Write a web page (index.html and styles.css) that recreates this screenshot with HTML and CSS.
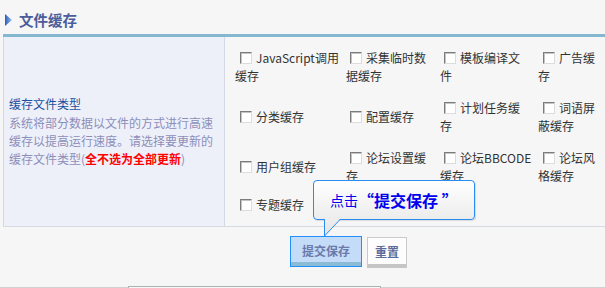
FILE: index.html
```html
<!DOCTYPE html>
<html lang="zh-CN">
<head>
<meta charset="utf-8">
<title>文件缓存</title>
<link rel="stylesheet" href="styles.css">
</head>
<body>
<div class="header">
  <svg class="tri" width="7" height="12" viewBox="0 0 7 12">
    <defs>
      <linearGradient id="tg" x1="0" y1="0" x2="1" y2="0">
        <stop offset="0" stop-color="#2a5cb8"/>
        <stop offset="1" stop-color="#9cc0ee"/>
      </linearGradient>
    </defs>
    <polygon points="0,0 7,6 0,12" fill="url(#tg)"/>
  </svg>
  <h1 class="title">文件缓存</h1>
</div>

<div class="tbl">
  <div class="lcell">
    <div class="ltitle">缓存文件类型</div>
    <div class="ldesc">系统将部分数据以文件的方式进行高速缓存以提高运行速度。请选择要更新的缓存文件类型(<b class="red">全不选为全部更新</b>)</div>
  </div>
  <div class="rcell">
    <div class="grid">
      <label class="opt"><span class="cb"></span>JavaScript调用缓存</label>
      <label class="opt"><span class="cb"></span>采集临时数据缓存</label>
      <label class="opt"><span class="cb"></span>模板编译文件</label>
      <label class="opt"><span class="cb"></span>广告缓存</label>

      <label class="opt"><span class="cb"></span>分类缓存</label>
      <label class="opt"><span class="cb"></span>配置缓存</label>
      <label class="opt"><span class="cb"></span>计划任务缓存</label>
      <label class="opt"><span class="cb"></span>词语屏蔽缓存</label>

      <label class="opt"><span class="cb"></span>用户组缓存</label>
      <label class="opt"><span class="cb"></span>论坛设置缓存</label>
      <label class="opt"><span class="cb"></span>论坛BBCODE缓存</label>
      <label class="opt"><span class="cb"></span>论坛风格缓存</label>

      <label class="opt"><span class="cb"></span>专题缓存</label>
    </div>
  </div>
</div>

<div class="btns">
  <button class="btn submit">提交保存</button>
  <button class="btn reset">重置</button>
</div>

<div class="footer">
  <div class="seg first"></div>
  <div class="fbox"></div>
  <div class="seg rest"></div>
</div>

<div class="callout">
  <span class="c1">点击</span><span class="c2">“提交保存 ”</span>
</div>
<svg class="tail" width="20" height="18" viewBox="0 0 20 18">
  <defs>
    <linearGradient id="tl" x1="0" y1="0" x2="0" y2="1">
      <stop offset="0" stop-color="#eeeeee"/>
      <stop offset="1" stop-color="#e2e2e2"/>
    </linearGradient>
  </defs>
  <polygon points="2.5,0 2.5,17 18,0" fill="url(#tl)"/>
  <polyline points="2.5,0 2.5,17 18,0.5" fill="none" stroke="#2a8cf2" stroke-width="1"/>
</svg>
</body>
</html>
```

FILE: styles.css
```css
html, body {
  margin: 0;
  padding: 0;
  overflow: hidden;
}
body {
  width: 605px;
  height: 288px;
  background: #f6f6f6;
  font-family: "Noto Sans CJK SC", "DejaVu Sans", sans-serif;
  font-size: 12px;
  color: #333;
  position: relative;
}

.header {
  height: 34px;
  box-sizing: border-box;
  padding: 5px 0 0 5px;
  display: flex;
  align-items: center;
  gap: 7px;
}
.tri {
  display: block;
}
.title {
  margin: 0;
  font-size: 14.5px;
  font-weight: bold;
  line-height: 16px;
  color: #4b5d9b;
}

.tbl {
  margin-left: 3px;
  border-top: 3px solid #86b7d0;
  border-bottom: 1px solid #d6dbe3;
  display: flex;
}
.lcell {
  width: 222px;
  box-sizing: border-box;
  border-left: 1px solid #d2d8e6;
  border-right: 1px solid #d2d8e4;
  background: #eef0f9;
  padding: 0 5px;
  display: flex;
  flex-direction: column;
  justify-content: center;
  line-height: 18px;
}
.ltitle {
  color: #1d4f9f;
  margin-bottom: 1px;
}
.ldesc {
  color: #8c8eba;
}
.red {
  color: #ff0000;
  font-weight: bold;
}

.rcell {
  flex: 1;
  padding: 5px 0 8px 10px;
}
.grid {
  display: grid;
  grid-template-columns: 111px 94px 98px 1fr;
  grid-template-rows: 50px 50px 50px 26px;
  align-items: center;
}
.opt {
  padding-right: 8px;
  line-height: 18px;
  color: #333;
}
.grid .opt:nth-child(4n+1) {
  padding-right: 2px;
}
.grid .opt:nth-child(4n+3) {
  padding-right: 6.5px;
}
.cb {
  display: inline-block;
  width: 12px;
  height: 12px;
  box-sizing: border-box;
  border: 1px solid;
  border-color: #7c7c7c #dcdcdc #dcdcdc #7c7c7c;
  box-shadow: inset 1px 1px 0 #c4c4c4;
  background: #fff;
  margin: 0 4px 0 5px;
  vertical-align: -1px;
}
.grid .opt:nth-child(4n+2) .cb,
.grid .opt:nth-child(4n+3) .cb {
  margin-left: 4px;
}

.btns {
  display: flex;
  align-items: flex-start;
  gap: 5px;
  padding-left: 290px;
  margin-top: 9px;
}
.btn {
  font-family: "Noto Sans CJK SC", sans-serif;
  font-size: 12px;
  font-weight: bold;
  padding: 0;
  margin: 0;
  cursor: pointer;
}
.submit {
  width: 72px;
  height: 31px;
  background: #c4dcf8;
  border: 1px solid #2090ff;
  box-shadow: inset 0 -4px 0 #8cbbd6;
  color: #6b7aab;
  padding-bottom: 3px;
}
.reset {
  width: 40px;
  height: 31px;
  margin-top: 1px;
  background: #fdfdfd;
  border: 1px solid #cacaca;
  border-bottom: 4px solid #c6c6c6;
  color: #5c6b9c;
}

.footer {
  display: flex;
  align-items: flex-start;
  margin-top: 18px;
}
.seg {
  margin-top: 1px;
  height: 4px;
  border-top: 1px solid #cdd1d1;
}
.seg.first {
  width: 128px;
}
.seg.rest {
  flex: 1;
}
.fbox {
  width: 253px;
  height: 5px;
  box-sizing: border-box;
  border: 1px solid #a9b3b3;
  border-bottom: none;
  background: #f8f8f8;
}

.callout {
  position: absolute;
  left: 313px;
  top: 180px;
  width: 162px;
  height: 40px;
  box-sizing: border-box;
  border: 1px solid #2a8cf2;
  border-radius: 4px;
  background: linear-gradient(#ffffff, #ececec);
  box-shadow: 1px 1px 1px rgba(0,0,0,0.12);
  padding-left: 16px;
  display: flex;
  align-items: center;
  color: #0000ee;
  white-space: nowrap;
}
.c1 {
  font-size: 14px;
}
.c2 {
  font-size: 16px;
  font-weight: bold;
}
.tail {
  position: absolute;
  left: 322px;
  top: 219px;
}
```
